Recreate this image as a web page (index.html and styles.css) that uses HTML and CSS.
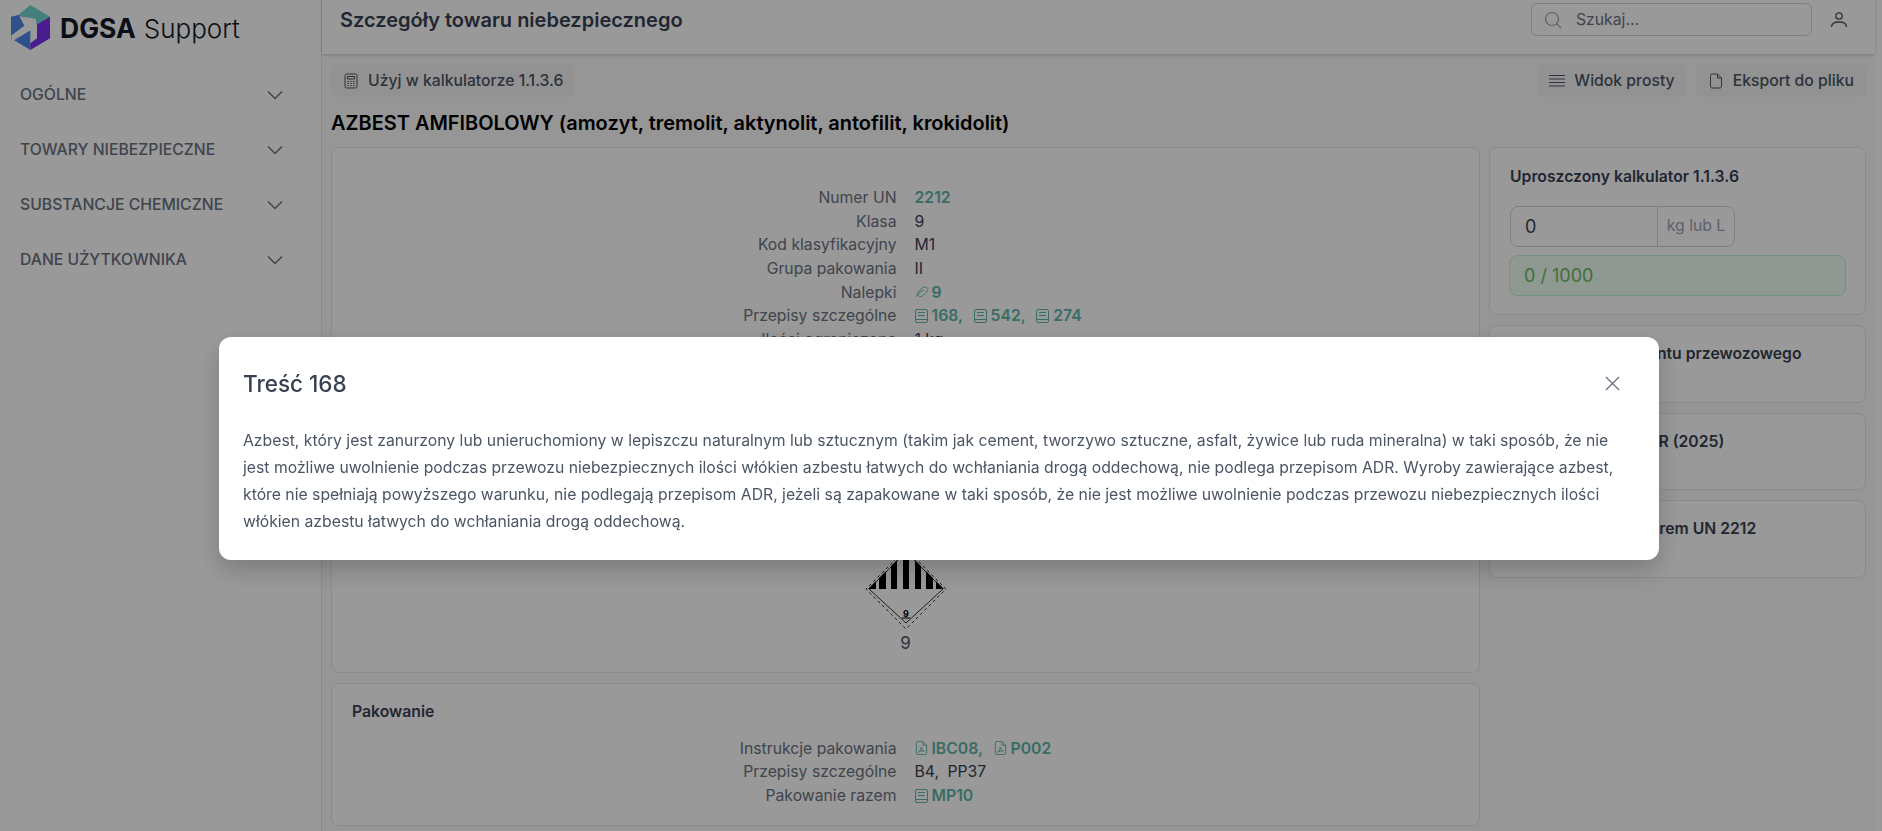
FILE: index.html
```html
<!DOCTYPE html>
<html lang="pl">
<head>
<meta charset="utf-8">
<title>DGSA Support</title>
<link rel="stylesheet" href="styles.css">
</head>
<body>
<svg class="defs" width="0" height="0" aria-hidden="true">
  <symbol id="i-book" viewBox="0 0 13 14"><path d="M2 .5h9A1.500 1.500 0 0 1 12.500 2v10A1.500 1.500 0 0 1 11 13.500H2A1.500 1.500 0 0 1 .5 12V2A1.500 1.500 0 0 1 2 .5zM3 3.500h7M3 6.500h7M.5 10.500h12" fill="none" stroke="currentColor" stroke-width="1"/></symbol>
  <symbol id="i-pdf" viewBox="0 0 13 15"><path d="M1 2A1.500 1.500 0 0 1 2.500.5H8L12 4.500V13a1.500 1.500 0 0 1-1.500 1.500h-8A1.500 1.500 0 0 1 1 13zM8 .5V4.500H12M3.500 12C5 10.500 6.200 8.500 6.200 6.500c0 2 1.500 3.800 3.300 4.200-2-.2-4.200.2-6 1.300z" fill="none" stroke="currentColor" stroke-width="1"/></symbol>
</svg>
<div class="app">
  <aside class="sidebar">
    <div class="brand">
      <svg class="logo" viewBox="0 0 117 135" aria-hidden="true">
        <path d="M58 0 117 35 78 58 60 40 22 30z" fill="#72d4d2"/>
        <path d="M0 35 58 70V135L0 100z" fill="#4f86e8"/>
        <path d="M0 35 22 30 60 40 40 62 0 92z" fill="#4f86e8"/>
        <path d="M117 35V100L58 135V115L78 100V58z" fill="#7a2ff0"/>
        <path d="M25 33 75 42 76 100 60 75 5 108 0 92 40 62z" fill="#fff"/>
      </svg>
      <span class="brand-name"><b>DGSA</b><span>Support</span></span>
    </div>
    <nav class="menu">
      <div class="menu-item"><span>OGÓLNE</span><svg viewBox="0 0 18 10"><path d="M2 1.500 9 8.500 16 1.500"/></svg></div>
      <div class="menu-item"><span>TOWARY NIEBEZPIECZNE</span><svg viewBox="0 0 18 10"><path d="M2 1.500 9 8.500 16 1.500"/></svg></div>
      <div class="menu-item"><span>SUBSTANCJE CHEMICZNE</span><svg viewBox="0 0 18 10"><path d="M2 1.500 9 8.500 16 1.500"/></svg></div>
      <div class="menu-item"><span>DANE UŻYTKOWNIKA</span><svg viewBox="0 0 18 10"><path d="M2 1.500 9 8.500 16 1.500"/></svg></div>
    </nav>
  </aside>
  <div class="main">
    <header class="topbar">
      <h1>Szczegóły towaru niebezpiecznego</h1>
      <div class="top-right">
        <div class="search">
          <svg viewBox="0 0 18 18"><circle cx="8" cy="8" r="6.500"/><path d="m12.800 12.800 4.200 4.200"/></svg>
          <span>Szukaj...</span>
        </div>
        <svg class="user" viewBox="0 0 18 18"><circle cx="9" cy="5" r="3.200"/><path d="M1.500 16c0-3 2.500-5 7.500-5s7.500 2 7.500 5"/></svg>
      </div>
    </header>
    <div class="content">
      <div class="actions">
        <button class="btn"><svg viewBox="0 0 16 16"><rect x="2" y="1" width="12" height="14" rx="1.500"/><path d="M4.500 3.500h7v2.500h-7zM4.500 8.500h1.500M7.300 8.500h1.500M10 8.500h1.500M4.500 10.500h1.500M7.300 10.500h1.500M10 10.500h1.500M4.500 12.700h1.500M7.300 12.700h1.500M10 12.700h1.500"/></svg>Użyj w kalkulatorze 1.1.3.6</button>
        <div class="actions-right">
          <button class="btn"><svg viewBox="0 0 16 16"><path d="M0 2.500h16M0 6h16M0 9.500h16M0 13h16"/></svg>Widok prosty</button>
          <button class="btn"><svg viewBox="0 0 16 16"><path d="M2.500 2.500A1.500 1.500 0 0 1 4 1h5.500L13.500 5v8.500A1.500 1.500 0 0 1 12 15H4a1.500 1.500 0 0 1-1.500-1.500zM9.500 1V5H13.500"/></svg>Eksport do pliku</button>
        </div>
      </div>
      <h2 class="goods-title">AZBEST AMFIBOLOWY (amozyt, tremolit, aktynolit, antofilit, krokidolit)</h2>
      <div class="columns">
        <div class="col-left">
          <section class="card card-main">
            <dl class="rows">
              <dt>Numer UN</dt><dd><a class="link">2212</a></dd>
              <dt>Klasa</dt><dd>9</dd>
              <dt>Kod klasyfikacyjny</dt><dd>M1</dd>
              <dt>Grupa pakowania</dt><dd>II</dd>
              <dt>Nalepki</dt><dd><a class="link"><svg class="ico-clip" viewBox="0 0 15 12"><path d="M1 11C2.500 7 6.500 1 10.500 .8 13.500.7 14.500 2.500 13 5 11 8.500 7 11.500 4.500 10.800 2.800 10.200 3.500 8 5 6.500 6.500 5 8.500 4 9.800 4.500" fill="none" stroke="currentColor"/></svg>9</a></dd>
              <dt>Przepisy szczególne</dt><dd><a class="link"><svg class="ico"><use href="#i-book"/></svg>168,</a><a class="link"><svg class="ico"><use href="#i-book"/></svg>542,</a><a class="link"><svg class="ico"><use href="#i-book"/></svg>274</a></dd>
              <dt>Ilości ograniczone</dt><dd>1 kg</dd>
            </dl>
            <figure class="placard">
              <svg viewBox="0 0 84 84" aria-hidden="true">
                <path d="M42 2 82 42 42 82 2 42z" fill="#fff" stroke="#000" stroke-width=".8" stroke-dasharray="3 3"/>
                <path d="M42 5 79 42 42 76 5 42z" fill="#fff" stroke="#000" stroke-width=".8"/>
                <path d="M4 42 12 34V42zM15 42V31L22 24V42zM27 42V19L33 13V42zM39 42V6H45V42zM51 42V13L57 19V42zM62 42V24L69 31V42zM72 42V34L80 42z"/>
                <text class="placard-num" x="42" y="69.500">9</text>
                <path d="M38 71h8" stroke="#000"/>
              </svg>
              <figcaption>9</figcaption>
            </figure>
          </section>
          <section class="card card-pack">
            <h3>Pakowanie</h3>
            <dl class="rows">
              <dt>Instrukcje pakowania</dt><dd><a class="link"><svg class="ico"><use href="#i-pdf"/></svg>IBC08,</a><a class="link"><svg class="ico"><use href="#i-pdf"/></svg>P002</a></dd>
              <dt>Przepisy szczególne</dt><dd><span class="plain">B4,</span><span>PP37</span></dd>
              <dt>Pakowanie razem</dt><dd><a class="link"><svg class="ico"><use href="#i-book"/></svg>MP10</a></dd>
            </dl>
          </section>
        </div>
        <div class="col-right">
          <section class="card side-calc">
            <h3>Uproszczony kalkulator 1.1.3.6</h3>
            <div class="input-group"><span class="input-value">0</span><span class="input-unit">kg lub L</span></div>
            <div class="result">0 / 1000</div>
          </section>
          <section class="card side-a"><h3>Opis treści dokumentu przewozowego</h3></section>
          <section class="card side-b"><h3>Dane w Tabeli A ADR (2025)</h3></section>
          <section class="card side-c"><h3>Inne towary z numerem UN 2212</h3></section>
        </div>
      </div>
    </div>
  </div>
</div>
<div class="overlay">
  <div class="modal" role="dialog">
    <div class="modal-head">
      <h4>Treść 168</h4>
      <svg class="close" viewBox="0 0 16 16"><path d="M1 1 15 15M15 1 1 15"/></svg>
    </div>
    <p>Azbest, który jest zanurzony lub unieruchomiony w lepiszczu naturalnym lub sztucznym (takim jak cement, tworzywo sztuczne, asfalt, żywice lub ruda mineralna) w taki sposób, że nie jest możliwe uwolnienie podczas przewozu niebezpiecznych ilości włókien azbestu łatwych do wchłaniania drogą oddechową, nie podlega przepisom ADR. Wyroby zawierające azbest, które nie spełniają powyższego warunku, nie podlegają przepisom ADR, jeżeli są zapakowane w taki sposób, że nie jest możliwe uwolnienie podczas przewozu niebezpiecznych ilości włókien azbestu łatwych do wchłaniania drogą oddechową.</p>
  </div>
</div>
</body>
</html>
```
FILE: styles.css
```css
* { box-sizing: border-box; }
html, body { margin: 0; height: 100%; overflow: hidden; }
body { font-family: Inter, "Noto Sans", sans-serif; color: #111827; background: #fff; }
.defs { display: block; height: 0; }
.app { display: flex; height: 831px; padding-right: 7px; }

.sidebar { width: 322px; flex: none; border-right: 1px solid #e5e7eb; background: #fff; }
.brand { display: flex; align-items: center; gap: 10px; height: 54px; padding: 1px 0 0 11px; }
.logo { width: 39px; height: 45px; flex: none; }
.brand-name { display: flex; align-items: baseline; gap: 8px; font-size: 26px; font-weight: 300; color: #111827; }
.brand-name b { font-size: 26.500px; font-weight: 700; }
.menu { padding-top: 13px; }
.menu-item { display: flex; justify-content: space-between; align-items: center; height: 55px; padding: 0 37px 0 20px; font-size: 15.750px; font-weight: 500; color: #6b7280; }
.menu-item svg { width: 18px; height: 10px; fill: none; stroke: #6b7280; stroke-width: 1.500; }

.main { flex: 1; min-width: 0; display: flex; flex-direction: column; background: #fafafa; }
.topbar { height: 54px; flex: none; display: flex; justify-content: space-between; align-items: center; padding: 0 27px 0 18px; background: #fff; box-shadow: 0 1px 3px rgba(0,0,0,.2); }
.topbar h1 { margin: 0 0 14px; font-size: 20px; font-weight: 600; color: #374151; }
.top-right { display: flex; align-items: center; gap: 18px; margin-top: -15px; }
.search { width: 281px; height: 33px; display: flex; align-items: center; gap: 14px; padding: 0 12px; border: 1px solid #d1d5db; border-radius: 6px; font-size: 15.750px; color: #6b7280; }
.search svg { width: 18px; height: 18px; fill: none; stroke: #9ca3af; stroke-width: 1.200; }
.user { width: 18px; height: 18px; fill: none; stroke: #4b5563; stroke-width: 1.300; }

.content { padding: 10px 9px 0; }
.actions { display: flex; justify-content: space-between; }
.actions-right { display: flex; gap: 9px; }
.btn { display: flex; align-items: center; gap: 9px; height: 33px; padding: 0 12px; border: 0; border-radius: 6px; background: #f3f4f6; font: 500 15.750px Inter, sans-serif; color: #4b5563; white-space: nowrap; }
.btn svg { width: 16px; height: 16px; fill: none; stroke: #4b5563; stroke-width: 1; flex: none; }
.goods-title { margin: 14px 0 12px; font-size: 19.950px; line-height: 24px; font-weight: 600; color: #000; }

.columns { display: grid; grid-template-columns: 1149px 377px; gap: 9px; }
.col-left, .col-right { display: flex; flex-direction: column; gap: 10px; }
.card { background: #fff; border: 1px solid #e5e7eb; border-radius: 8px; padding: 20px; }
.card h3 { margin: 0; font-size: 15.750px; line-height: 20px; font-weight: 600; color: #374151; white-space: nowrap; }

.card-main { height: 526px; padding-top: 38px; }
.card-pack { height: 143px; padding-top: 18px; }
.card-pack .rows { margin-top: 14.500px; }
.rows { display: grid; grid-template-columns: 1fr 1fr; column-gap: 18px; margin: 0; font-size: 15.750px; line-height: 23.625px; }
.rows dt { text-align: right; color: #6b7280; }
.rows dd { margin: 0; display: flex; gap: 10.500px; color: #374151; }
.plain { margin-right: -2px; }
.link { display: inline-flex; align-items: center; gap: 4px; font-weight: 600; color: #5fb5a8; }
.ico { width: 13px; height: 14px; flex: none; }
.ico-clip { width: 14px; height: 12px; flex: none; margin-right: -1px; }
.placard { margin: 195.600px 0 0; text-align: center; font-size: 17px; color: #4b5563; }
.placard svg { display: block; width: 84px; height: 84px; margin: 0 auto; }
.placard-num { font: 700 9px Inter, sans-serif; text-anchor: middle; }
.placard figcaption { line-height: 24px; }

.side-calc { height: 168px; padding: 19px 20px; }
.side-a { height: 78px; }
.side-b { height: 77px; }
.side-c { height: 78px; }
.side-a, .side-b, .side-c { padding: 18px 20px; }
.input-group { display: flex; width: 225px; height: 41px; margin-top: 19px; border: 1px solid #d1d5db; border-radius: 8px; }
.input-value { flex: 1; padding-left: 14px; line-height: 39px; font-size: 18px; color: #374151; }
.input-unit { width: 77px; border-left: 1px solid #d1d5db; text-align: center; line-height: 38px; font-size: 15.750px; color: #9ca3af; }
.result { height: 41px; margin: 8px -1px 0 -1px; padding-left: 14px; border: 1px solid #bbf7d0; border-radius: 8px; background: #f0fdf4; line-height: 39px; font-size: 18px; color: #6abb62; }

.overlay { position: fixed; inset: 0; background: rgba(0,0,0,.4); padding: 337px 223px 0 219px; }
.modal { background: #fff; border-radius: 12px; height: 222.500px; padding: 24px 39px 24px 24px; box-shadow: 0 10px 25px rgba(0,0,0,.2); }
.modal-head { display: flex; justify-content: space-between; align-items: center; height: 44px; margin-bottom: 22px; }
.modal-head h4 { margin: 0; font-size: 22.500px; font-weight: 500; color: #374151; }
.close { width: 15px; height: 15px; fill: none; stroke: #6b7280; stroke-width: 1.400; }
.modal p { margin: 0; font-size: 15.750px; line-height: 27px; color: #4b5563; }
```
